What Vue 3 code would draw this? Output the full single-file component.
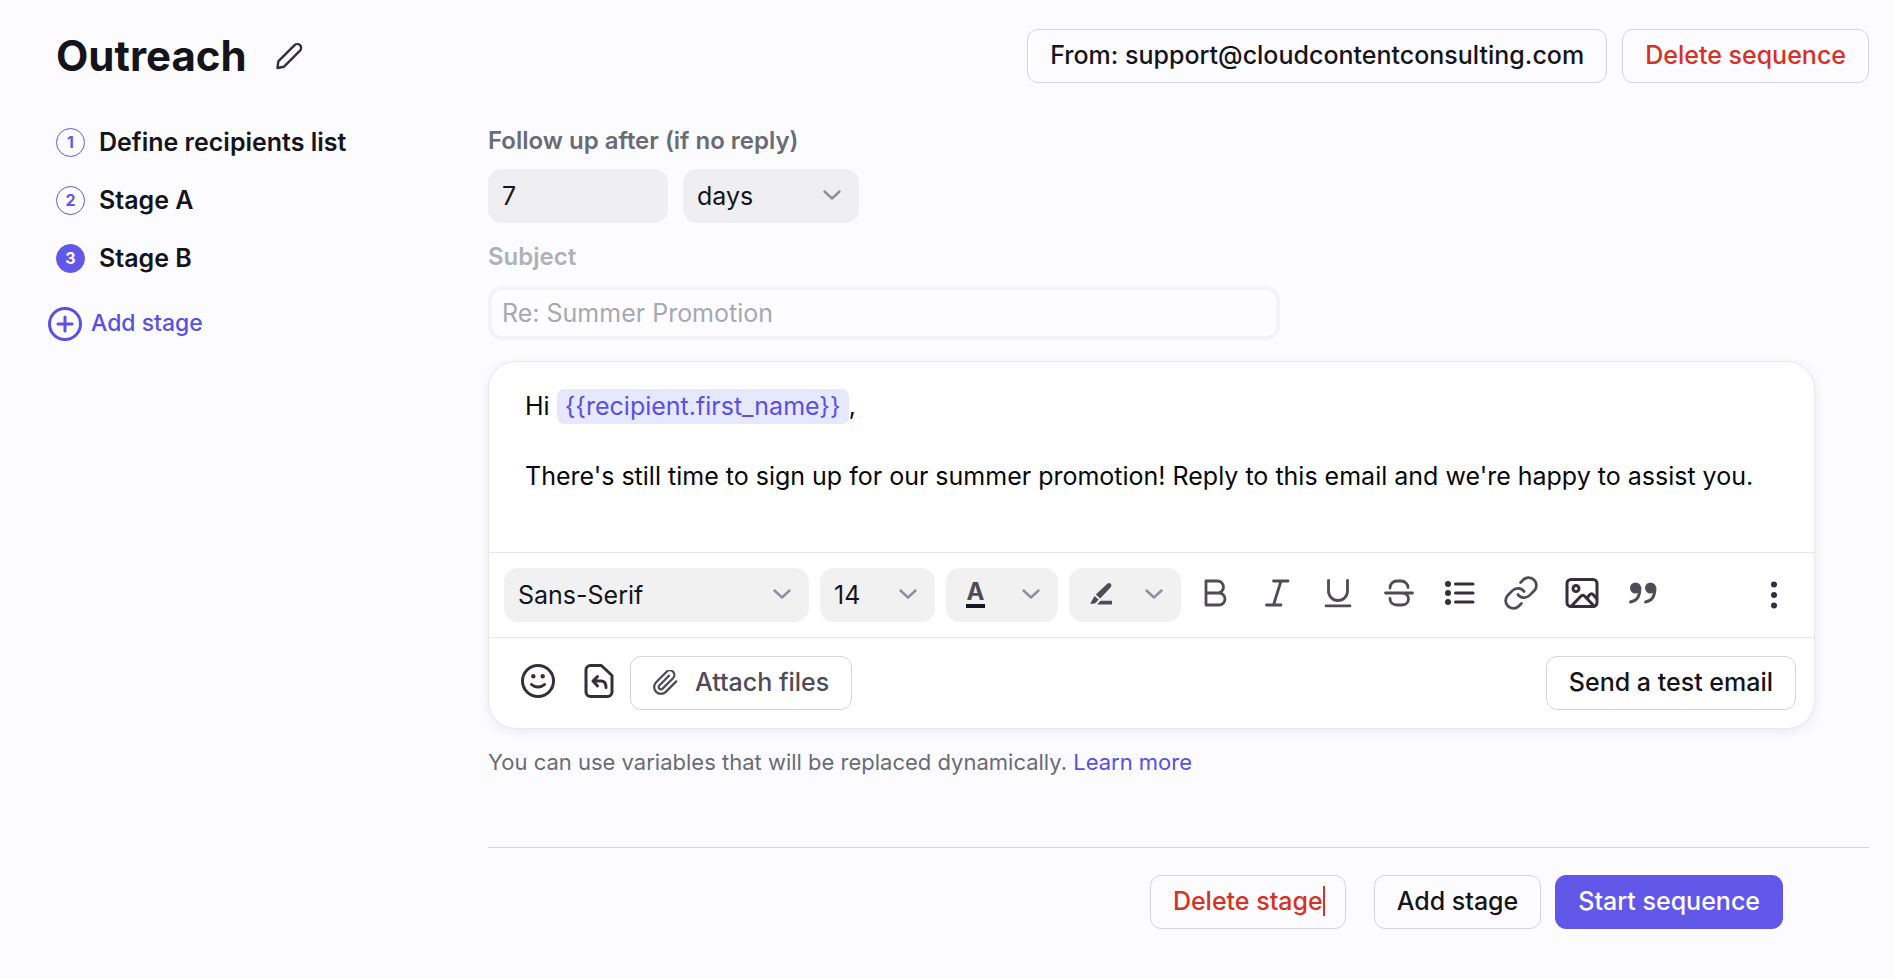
<template>
  <div class="page">
    <header class="page-header">
      <div class="title-row">
        <h1>{{ sequenceName }}</h1>
        <button type="button" class="icon-btn" aria-label="Rename sequence">
          <svg class="pencil" viewBox="0 0 28 28">
            <path d="M2.500 26l.8-6.600L19.600 3.200a3.800 3.800 0 0 1 5.400 5.400L8.800 24.800z" />
          </svg>
        </button>
      </div>

      <div class="header-actions">
        <button type="button" class="btn">From: {{ sender }}</button>
        <button type="button" class="btn danger">Delete sequence</button>
      </div>
    </header>

    <div class="layout">
      <nav class="stages">
        <ol>
          <li v-for="(stage, index) in stages" :key="stage">
            <a href="#" :class="{ current: index === currentStage }" @click.prevent="currentStage = index">
              <span class="stage-number">{{ index + 1 }}</span>
              {{ stage }}
            </a>
          </li>
        </ol>

        <button type="button" class="add-stage">
          <svg viewBox="0 0 34 34">
            <circle cx="17" cy="17" r="15.500" />
            <path d="M17 10v14M10 17h14" />
          </svg>
          Add stage
        </button>
      </nav>

      <main class="content">
        <label class="field-label" for="delay">Follow up after (if no reply)</label>
        <div class="delay-row">
          <input id="delay" v-model="delay" class="filled delay-input" type="text" />
          <div class="select-wrap unit-select">
            <select v-model="unit" class="filled" aria-label="Delay unit">
              <option>days</option>
              <option>weeks</option>
            </select>
            <svg class="chevron" viewBox="0 0 18 10"><path d="M1.500 1.500L9 8.500l7.500-7" /></svg>
          </div>
        </div>

        <label class="field-label muted" for="subject">Subject</label>
        <input id="subject" class="subject-input" type="text" placeholder="Re: Summer Promotion" disabled />

        <section class="editor">
          <div class="editor-body" contenteditable="true" spellcheck="false" role="textbox" aria-label="Message">
            <p>Hi <span class="variable">{{ variable }}</span>,</p>
            <p><br /></p>
            <p>There's still time to sign up for our summer promotion! Reply to this email and we're happy to assist you.</p>
          </div>

          <div class="toolbar">
            <div class="select-wrap font-select">
              <select v-model="font" class="filled" aria-label="Font">
                <option>Sans-Serif</option>
                <option>Serif</option>
              </select>
              <svg class="chevron" viewBox="0 0 18 10"><path d="M1.500 1.500L9 8.500l7.500-7" /></svg>
            </div>
            <div class="select-wrap size-select">
              <select v-model="fontSize" class="filled" aria-label="Font size">
                <option>14</option>
                <option>16</option>
              </select>
              <svg class="chevron" viewBox="0 0 18 10"><path d="M1.500 1.500L9 8.500l7.500-7" /></svg>
            </div>
            <button type="button" class="filled picker" aria-label="Text color">
              <span class="color-letter">A</span>
              <svg class="chevron" viewBox="0 0 18 10"><path d="M1.500 1.500L9 8.500l7.500-7" /></svg>
            </button>
            <button type="button" class="filled picker" aria-label="Highlight color">
              <svg class="marker" viewBox="0 0 24 24">
                <path d="M18.300 1.800a2.400 2.400 0 0 1 3.400 3.400L11.200 16.400 6.800 12.600z" />
                <path d="M5.600 14l4 3.600-2.200 2.600c-1.600 1.400-3.800 1.900-6.200 1.500z" />
                <path d="M11.600 18.700H23v3.700H8z" />
              </svg>
              <svg class="chevron" viewBox="0 0 18 10"><path d="M1.500 1.500L9 8.500l7.500-7" /></svg>
            </button>

            <div class="format-buttons">
              <button type="button" class="icon-btn" aria-label="Bold">
                <svg class="tool" viewBox="0 0 34 34">
                  <path d="M7 5h11.500a6 6 0 0 1 0 12H7zM7 17h13a6 6 0 0 1 0 12H7z" />
                </svg>
              </button>
              <button type="button" class="icon-btn" aria-label="Italic">
                <svg class="tool" viewBox="0 0 34 34"><path d="M13.500 5H28M6.500 29H21M21 5l-7.500 24" /></svg>
              </button>
              <button type="button" class="icon-btn" aria-label="Underline">
                <svg class="tool" viewBox="0 0 34 34"><path d="M7.500 4.500V15a9.500 9.500 0 0 0 19 0V4.500M5 29.800h24" /></svg>
              </button>
              <button type="button" class="icon-btn" aria-label="Strikethrough">
                <svg class="tool" viewBox="0 0 34 34">
                  <path d="M8 12c0-4 3-7 7-7h4c4 0 7 3 7 6.500M3.500 17h27M20 17c4 0 6.500 2.500 6.500 6s-3 6-7 6H15c-4 0-7-2.500-7-6.500" />
                </svg>
              </button>
              <button type="button" class="icon-btn" aria-label="Bulleted list">
                <svg class="tool dark" viewBox="0 0 34 34">
                  <path d="M12.500 8h17.500M12.500 17h17.500M12.500 26h17.500" />
                  <g class="solid"><circle cx="5" cy="8" r="3" /><circle cx="5" cy="17" r="3" /><circle cx="5" cy="26" r="3" /></g>
                </svg>
              </button>
              <button type="button" class="icon-btn" aria-label="Link">
                <svg class="tool link-icon" viewBox="1 1 22 22">
                  <path d="M10 13a5 5 0 0 0 7.540.54l3-3a5 5 0 0 0-7.070-7.070l-1.720 1.710" />
                  <path d="M14 11a5 5 0 0 0-7.540-.54l-3 3a5 5 0 0 0 7.070 7.070l1.710-1.710" />
                </svg>
              </button>
              <button type="button" class="icon-btn" aria-label="Insert image">
                <svg class="tool dark" viewBox="0 0 34 34">
                  <rect x="2" y="3.500" width="30" height="27" rx="4" />
                  <circle cx="11" cy="12.500" r="3" />
                  <path d="M6.500 30l9-9.500c1.500-1.600 3-1.600 4.500 0L29 30M22.500 21.500l2-2.500c1.300-1.600 2.700-1.600 4 0l3 3.500" />
                </svg>
              </button>
              <button type="button" class="icon-btn" aria-label="Quote">
                <svg class="tool" viewBox="0 0 34 34">
                  <g class="solid"><circle cx="9.500" cy="12" r="5.500" /><circle cx="24.500" cy="12" r="5.500" /></g>
                  <path d="M14 12c0 8-3.500 13-9.500 14M29 12c0 8-3.500 13-9.500 14" />
                </svg>
              </button>
            </div>

            <button type="button" class="icon-btn more" aria-label="More options">
              <svg class="tool dark" viewBox="0 0 34 34">
                <g class="solid"><circle cx="17" cy="6.500" r="3" /><circle cx="17" cy="17" r="3" /><circle cx="17" cy="27.500" r="3" /></g>
              </svg>
            </button>
          </div>

          <div class="editor-footer">
            <button type="button" class="icon-btn" aria-label="Emoji">
              <svg class="tool dark" viewBox="0 0 34 34">
                <circle cx="17" cy="17" r="15.500" />
                <path d="M10.500 20.500c3.500 3.300 9.500 3.300 13 0" />
                <g class="solid"><circle cx="12.300" cy="12.300" r="2.200" /><circle cx="21.700" cy="12.300" r="2.200" /></g>
              </svg>
            </button>
            <button type="button" class="icon-btn" aria-label="Insert template">
              <svg class="tool dark" viewBox="0 0 34 34">
                <path d="M8.500 1.500h10.800L30 11.500V28a4.500 4.500 0 0 1-4.500 4.500h-17A4.500 4.500 0 0 1 4 28V6a4.500 4.500 0 0 1 4.500-4.500z" />
                <path d="M15.500 12.500L11 17l4.500 5M11.500 17H19c3.500 0 5 2.500 5 6.500" />
              </svg>
            </button>
            <button type="button" class="btn attach">
              <svg viewBox="1 1 22 22">
                <path d="M21.440 11.050l-9.190 9.190a6 6 0 0 1-8.490-8.490l9.190-9.190a4 4 0 0 1 5.660 5.660l-9.200 9.190a2 2 0 0 1-2.830-2.830l8.490-8.480" />
              </svg>
              Attach files
            </button>
            <button type="button" class="btn send-test">Send a test email</button>
          </div>
        </section>

        <p class="hint">
          You can use variables that will be replaced dynamically.
          <a href="#">Learn more</a>
        </p>

        <footer class="page-footer">
          <button type="button" class="btn danger delete-stage">Delete stage<span class="caret"></span></button>
          <button type="button" class="btn">Add stage</button>
          <button type="button" class="btn primary">Start sequence</button>
        </footer>
      </main>
    </div>
  </div>
</template>

<script setup>
import { ref } from "vue";

const sequenceName = ref("Outreach");
const sender = "support@cloudcontentconsulting.com";

const stages = ["Define recipients list", "Stage A", "Stage B"];
const currentStage = ref(2);

const delay = ref("7");
const unit = ref("days");

// Kept as a string so the braces are not read as an interpolation.
const variable = "{{recipient.first_name}}";

const font = ref("Sans-Serif");
const fontSize = ref("14");
</script>

<style>
body {
  background: #fcfcff;
}
</style>

<style scoped>
.page {
  box-sizing: border-box;
  min-height: 100vh;
  padding: 29px 25px 48px 48px;
  background: #fcfcff;
  color: #15141a;
  font-family: Inter, "Liberation Sans", sans-serif;
  font-size: 25px;
  line-height: 35px;
}

.page *,
.page *::before {
  box-sizing: border-box;
}

button,
input,
select {
  margin: 0;
  font: inherit;
  color: inherit;
}

button {
  cursor: pointer;
}

svg {
  display: block;
  flex: none;
  fill: none;
  stroke: currentColor;
  stroke-linecap: round;
  stroke-linejoin: round;
}

.page-header,
.title-row,
.header-actions {
  display: flex;
  align-items: center;
}

.page-header {
  justify-content: space-between;
}

.title-row {
  gap: 28px;
  padding-left: 8px;
}

h1 {
  margin: 0;
  font-size: 42px;
  line-height: 54px;
  font-weight: 700;
}

.header-actions {
  gap: 15px;
}

.icon-btn {
  padding: 0;
  border: none;
  background: none;
  color: #352f3d;
}

.pencil {
  width: 28px;
  height: 28px;
  stroke-width: 2.4;
}

.btn {
  display: flex;
  align-items: center;
  height: 54px;
  padding: 0 22px 2px;
  border: 1px solid #d5d5da;
  border-radius: 11px;
  background: transparent;
  color: #15141a;
  font-weight: 500;
  white-space: nowrap;
}

.btn.danger {
  color: #d93025;
}

.btn.primary {
  border-color: #6158ea;
  background: #6158ea;
  color: #fff;
}

.layout {
  display: grid;
  grid-template-columns: 440px minmax(0, 1fr);
  margin-top: 40px;
}

.stages ol {
  display: flex;
  flex-direction: column;
  gap: 23px;
  margin: 2px 0 0;
  padding: 0 0 0 8px;
  list-style: none;
}

.stages a {
  display: flex;
  align-items: center;
  gap: 14px;
  color: #15141a;
  font-weight: 600;
  text-decoration: none;
}

.stage-number {
  display: flex;
  align-items: center;
  justify-content: center;
  width: 29px;
  height: 29px;
  border: 1px solid #6158ea;
  border-radius: 50%;
  color: #6158ea;
  font-size: 16px;
  line-height: 27px;
  font-weight: 700;
}

.current .stage-number {
  background: #6158ea;
  color: #fff;
}

.add-stage {
  display: flex;
  align-items: center;
  gap: 9px;
  margin-top: 30px;
  padding: 0;
  border: none;
  background: none;
  color: #5a4fe6;
  font-size: 23px;
  font-weight: 500;
}

.add-stage svg {
  width: 34px;
  height: 34px;
  stroke-width: 3;
}

.field-label {
  display: block;
  color: #6a6b75;
  font-size: 24px;
  font-weight: 600;
}

.field-label.muted {
  margin-top: 16px;
  color: #b0b0b7;
}

.delay-row {
  display: flex;
  gap: 15px;
  margin-top: 11px;
}

.filled {
  height: 54px;
  padding: 0 14px;
  border: none;
  border-radius: 14px;
  background: #efeff1;
}

.delay-input {
  width: 180px;
}

.select-wrap {
  position: relative;
}

.select-wrap select {
  width: 100%;
  appearance: none;
}

.unit-select {
  width: 176px;
}

.chevron {
  width: 18px;
  height: 10px;
  color: #8f8f99;
  stroke-width: 2.4;
}

.select-wrap .chevron {
  position: absolute;
  top: 21px;
  right: 18px;
  pointer-events: none;
}

.subject-input {
  display: block;
  width: 792px;
  max-width: 100%;
  height: 54px;
  margin-top: 12px;
  padding: 0 10px;
  border: 4px solid #f4f4f8;
  border-radius: 14px;
  background: #fdfdff;
}

.subject-input::placeholder {
  color: #a8a8ae;
  opacity: 1;
}

.editor {
  margin: 21px 54px 0 0;
  border: 1px solid #e8e8ea;
  border-radius: 28px;
  background: #fff;
  box-shadow: 0 3px 12px rgba(20, 20, 40, 0.07);
}

.editor-body {
  min-height: 190px;
  padding: 27px 36px;
  color: #08080c;
  outline: none;
}

.editor-body p {
  margin: 0;
}

.variable {
  display: inline-block;
  padding: 0 8px;
  border-radius: 7px;
  background: #e7e8fd;
  color: #5a4fe6;
}

.toolbar {
  display: flex;
  align-items: center;
  gap: 11px;
  padding: 15px;
  border-top: 1px solid #e8e8ea;
  border-bottom: 1px solid #e8e8ea;
}

.toolbar .filled {
  background: #f1f1f2;
}

.font-select {
  width: 305px;
}

.size-select {
  width: 115px;
}

.picker {
  display: flex;
  align-items: center;
  justify-content: space-between;
  width: 112px;
}

.toolbar .picker {
  padding: 0 18px 2px 20px;
}

.color-letter {
  width: 19px;
  border-bottom: 4px solid #15141f;
  color: #4f4b57;
  font-size: 24px;
  line-height: 24px;
  font-weight: 700;
  text-align: center;
}

.marker {
  width: 24px;
  height: 24px;
  color: #4f4b57;
  fill: currentColor;
  stroke: none;
}

.format-buttons {
  display: flex;
  gap: 27px;
  margin-left: 7px;
  padding-bottom: 4px;
}

.tool {
  width: 34px;
  height: 34px;
  color: #4f4b57;
  stroke-width: 2.8;
}

.tool.dark {
  color: #352f3d;
  stroke-width: 3;
}

.tool.link-icon {
  stroke-width: 1.800;
}

.solid {
  fill: currentColor;
  stroke: none;
}

.more {
  margin-left: auto;
  margin-right: 8px;
}

.editor-footer {
  display: flex;
  align-items: center;
  gap: 27px;
  padding: 18px 18px 18px 32px;
}

.editor-footer .icon-btn {
  padding-bottom: 4px;
}

.attach {
  gap: 17px;
  margin-left: -13px;
  color: #4f4b57;
}

.attach svg {
  width: 25px;
  height: 25px;
  stroke-width: 2;
}

.send-test {
  margin-left: auto;
}

.hint {
  margin: 16px 0 0;
  color: #6a6b75;
  font-size: 22px;
}

.hint a {
  color: #5a4fe6;
  text-decoration: none;
}

.page-footer {
  display: flex;
  justify-content: flex-end;
  gap: 14px;
  margin-top: 67px;
  padding: 27px 86px 0 0;
  border-top: 1px solid #d5d5da;
}

.delete-stage {
  margin-right: 14px;
}

.caret {
  width: 2px;
  height: 30px;
  margin-right: -2px;
  background: #d93025;
}
</style>
